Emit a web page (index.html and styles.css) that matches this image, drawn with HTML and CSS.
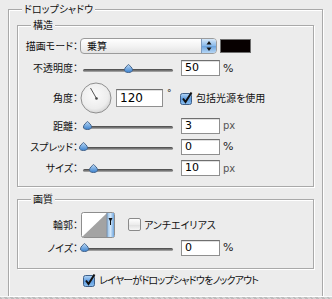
FILE: index.html
```html
<!DOCTYPE html>
<html lang="ja">
<head>
<meta charset="utf-8">
<link rel="stylesheet" href="styles.css">
</head>
<body>
<div class="panel">
  <div class="group outer">
    <span class="legend">ドロップシャドウ</span>

    <div class="group inner struct">
      <span class="legend">構造</span>

      <div class="row r-mode">
        <span class="label">描画モード：</span>
        <div class="select">
          <span class="select-text">乗算</span>
          <span class="stepper">
            <svg width="14" height="14" viewBox="0 0 14 14"><polygon points="7,2 9.5,5.5 4.5,5.5" fill="#111"/><polygon points="7,12 9.5,8.5 4.5,8.5" fill="#111"/></svg>
          </span>
        </div>
        <span class="swatch"></span>
      </div>

      <div class="row r-opacity">
        <span class="label">不透明度：</span>
        <div class="slider">
          <svg class="thumb" style="left:41px" width="9" height="9" viewBox="0 0 9 9"><defs><linearGradient id="tg1" x1="0" y1="0" x2="0" y2="1"><stop offset="0" stop-color="#bcd9f5"/><stop offset="1" stop-color="#3b82cf"/></linearGradient></defs><path d="M4.5 0.5 C6 2 8.5 3.5 8.5 6 C8.5 7.6 7 8.5 4.5 8.5 C2 8.5 0.5 7.6 0.5 6 C0.5 3.5 3 2 4.5 0.5 Z" fill="url(#tg1)" stroke="#46658c"/></svg>
        </div>
        <span class="field">50</span>
        <span class="unit">%</span>
      </div>

      <div class="row r-angle">
        <span class="label">角度：</span>
        <svg class="dial" width="32" height="32" viewBox="0 0 32 32"><defs><radialGradient id="dg" cx="0.45" cy="0.4" r="0.65"><stop offset="0" stop-color="#fbfbfb"/><stop offset="0.7" stop-color="#ededed"/><stop offset="1" stop-color="#cfcfcf"/></radialGradient></defs><circle cx="16" cy="16" r="15" fill="url(#dg)" stroke="#8f8f8f"/><line x1="16.5" y1="16.5" x2="10.5" y2="6" stroke="#555" stroke-width="1"/><circle cx="16.5" cy="16.5" r="1.3" fill="#444"/></svg>
        <span class="field wide">120</span>
        <span class="deg">°</span>
        <svg class="check on" width="13" height="13" viewBox="0 0 13 13"><defs><linearGradient id="cg1" x1="0" y1="0" x2="0" y2="1"><stop offset="0" stop-color="#b7d7f5"/><stop offset="0.5" stop-color="#5d9be0"/><stop offset="1" stop-color="#8cc0f0"/></linearGradient></defs><rect x="0.5" y="1.5" width="11" height="11" rx="2" fill="url(#cg1)" stroke="#3e5f88"/><path d="M3 6.5 L5.5 10 L11.5 0.5" fill="none" stroke="#111" stroke-width="2"/></svg>
        <span class="check-text">包括光源を使用</span>
      </div>

      <div class="row r-dist">
        <span class="label">距離：</span>
        <div class="slider">
          <svg class="thumb" style="left:0px" width="9" height="9" viewBox="0 0 9 9"><defs><linearGradient id="tg2" x1="0" y1="0" x2="0" y2="1"><stop offset="0" stop-color="#bcd9f5"/><stop offset="1" stop-color="#3b82cf"/></linearGradient></defs><path d="M4.5 0.5 C6 2 8.5 3.5 8.5 6 C8.5 7.6 7 8.5 4.5 8.5 C2 8.5 0.5 7.6 0.5 6 C0.5 3.5 3 2 4.5 0.5 Z" fill="url(#tg2)" stroke="#46658c"/></svg>
        </div>
        <span class="field">3</span>
        <span class="unit px">px</span>
      </div>

      <div class="row r-spread">
        <span class="label">スプレッド：</span>
        <div class="slider">
          <svg class="thumb" style="left:-4px" width="9" height="9" viewBox="0 0 9 9"><defs><linearGradient id="tg3" x1="0" y1="0" x2="0" y2="1"><stop offset="0" stop-color="#bcd9f5"/><stop offset="1" stop-color="#3b82cf"/></linearGradient></defs><path d="M4.5 0.5 C6 2 8.5 3.5 8.5 6 C8.5 7.6 7 8.5 4.5 8.5 C2 8.5 0.5 7.6 0.5 6 C0.5 3.5 3 2 4.5 0.5 Z" fill="url(#tg3)" stroke="#46658c"/></svg>
        </div>
        <span class="field">0</span>
        <span class="unit">%</span>
      </div>

      <div class="row r-size">
        <span class="label">サイズ：</span>
        <div class="slider">
          <svg class="thumb" style="left:6px" width="9" height="9" viewBox="0 0 9 9"><defs><linearGradient id="tg4" x1="0" y1="0" x2="0" y2="1"><stop offset="0" stop-color="#bcd9f5"/><stop offset="1" stop-color="#3b82cf"/></linearGradient></defs><path d="M4.5 0.5 C6 2 8.5 3.5 8.5 6 C8.5 7.6 7 8.5 4.5 8.5 C2 8.5 0.5 7.6 0.5 6 C0.5 3.5 3 2 4.5 0.5 Z" fill="url(#tg4)" stroke="#46658c"/></svg>
        </div>
        <span class="field">10</span>
        <span class="unit px">px</span>
      </div>
    </div>

    <div class="group inner quality">
      <span class="legend">画質</span>

      <div class="row r-contour">
        <span class="label">輪郭：</span>
        <svg class="contour" width="34" height="26" viewBox="0 0 34 26"><defs><linearGradient id="sg" x1="0" y1="0" x2="1" y2="0"><stop offset="0" stop-color="#8fbde9"/><stop offset="0.5" stop-color="#d3e6f8"/><stop offset="1" stop-color="#6fa6de"/></linearGradient></defs><rect x="0.5" y="0.5" width="33" height="25" rx="2" fill="#fff" stroke="#8d8d8d"/><polygon points="1,25 26,1 26,25" fill="#a3a3a3"/><rect x="26" y="1" width="7" height="24" fill="url(#sg)"/><line x1="26" y1="1" x2="26" y2="25" stroke="#7a8fa8"/><polygon points="27.5,6 31.5,6 29.5,10" fill="#111"/><line x1="29.5" y1="9" x2="29.5" y2="13" stroke="#111"/></svg>
        <span class="check off"></span>
        <span class="check-text">アンチエイリアス</span>
      </div>

      <div class="row r-noise">
        <span class="label">ノイズ：</span>
        <div class="slider">
          <svg class="thumb" style="left:-3px" width="9" height="9" viewBox="0 0 9 9"><defs><linearGradient id="tg5" x1="0" y1="0" x2="0" y2="1"><stop offset="0" stop-color="#bcd9f5"/><stop offset="1" stop-color="#3b82cf"/></linearGradient></defs><path d="M4.5 0.5 C6 2 8.5 3.5 8.5 6 C8.5 7.6 7 8.5 4.5 8.5 C2 8.5 0.5 7.6 0.5 6 C0.5 3.5 3 2 4.5 0.5 Z" fill="url(#tg5)" stroke="#46658c"/></svg>
        </div>
        <span class="field">0</span>
        <span class="unit">%</span>
      </div>
    </div>

    <div class="knockout">
      <svg class="check on" width="13" height="13" viewBox="0 0 13 13"><defs><linearGradient id="cg2" x1="0" y1="0" x2="0" y2="1"><stop offset="0" stop-color="#b7d7f5"/><stop offset="0.5" stop-color="#5d9be0"/><stop offset="1" stop-color="#8cc0f0"/></linearGradient></defs><rect x="0.5" y="1.5" width="11" height="11" rx="2" fill="url(#cg2)" stroke="#3e5f88"/><path d="M3 6.5 L5.5 10 L11.5 0.5" fill="none" stroke="#111" stroke-width="2"/></svg>
      <span class="check-text tight">レイヤーがドロップシャドウをノックアウト</span>
    </div>
  </div>
</div>
<div class="band"></div>
</body>
</html>
```

FILE: styles.css
```css
* { box-sizing: border-box; }
html, body { margin: 0; padding: 0; }
body {
  width: 332px;
  height: 299px;
  overflow: hidden;
  background: #ececec;
  font-family: "Noto Sans CJK JP", "Noto Sans", sans-serif;
  font-size: 10px;
  color: #111;
  font-feature-settings: "palt";
}
.panel { height: 296px; padding-top: 9px; }
.group {
  position: relative;
  border: 1px solid #a9a9a9;
  box-shadow: inset 1px 1px 0 #fff, 1px 1px 0 #fff;
}
.outer {
  margin-left: 8px;
  width: 315px;
  height: 287px;
  border-bottom: none;
  padding-top: 15px;
}
.inner { margin-left: 8px; width: 297px; }
.struct { height: 162px; padding-top: 9px; }
.quality { margin-top: 12px; height: 70px; padding-top: 11px; }
.legend {
  position: absolute;
  top: -8px;
  left: 13px;
  padding: 0 2px;
  line-height: 14px;
  background: #ececec;
  white-space: nowrap;
}
.row { display: flex; align-items: center; }
.r-mode { height: 21px; }
.r-opacity { height: 24px; }
.r-angle { height: 36px; }
.r-dist { height: 19px; }
.r-spread { height: 23px; }
.r-size { height: 20px; }
.r-contour { height: 27px; }
.r-noise { height: 19px; }
.label {
  flex: none;
  width: 62px;
  padding-right: 2px;
  text-align: right;
  white-space: nowrap;
  line-height: 14px;
}
.select {
  flex: none;
  display: flex;
  align-items: center;
  width: 137px;
  height: 16px;
  border: 1px solid #9b9b9b;
  border-radius: 4px;
  background: linear-gradient(#ffffff, #f3f3f3 50%, #e4e4e4);
  overflow: hidden;
}
.select-text { flex: 1; padding-left: 6px; line-height: 14px; }
.stepper {
  flex: none;
  width: 15px;
  height: 14px;
  border-left: 1px solid #7d9bbf;
  background: linear-gradient(#d6e8f9, #86b8ea 50%, #6aa3de 51%, #b6d6f5);
  display: flex;
  align-items: center;
  justify-content: center;
}
.stepper svg { display: block; }
.swatch {
  flex: none;
  margin-left: 3px;
  width: 31px;
  height: 14px;
  background: #070000;
  border: 1px solid #6e6e6e;
}
.slider {
  flex: none;
  position: relative;
  margin-left: 3px;
  width: 90px;
  height: 9px;
}
.slider::before {
  content: "";
  position: absolute;
  left: 0;
  right: 0;
  bottom: 1px;
  height: 3px;
  border-radius: 2px;
  background: linear-gradient(#444, #7e7e7e 60%, #b5b5b5);
}
.thumb { position: absolute; top: 0; display: block; }
.field {
  flex: none;
  margin-left: 8px;
  width: 39px;
  height: 16px;
  padding-left: 3px;
  border: 1px solid #8f8f8f;
  border-top-color: #6f6f6f;
  background: #fff;
  box-shadow: inset 0 1px 0 #e0e0e0;
  font-family: "DejaVu Sans", sans-serif;
  font-size: 11px;
  line-height: 14px;
  color: #000;
}
.unit {
  flex: none;
  margin-left: 3px;
  font-family: "DejaVu Sans", sans-serif;
  font-size: 11px;
  color: #222;
}
.unit.px { color: #555; font-size: 10px; }
.dial { flex: none; display: block; margin-left: 0; }
.field.wide { margin-left: 4px; width: 47px; height: 18px; font-size: 12px; line-height: 16px; }
.deg {
  flex: none;
  width: 11px;
  align-self: flex-start;
  margin-top: 8px;
  padding-left: 4px;
  font-family: "DejaVu Sans", sans-serif;
  font-size: 9px;
}
.check { flex: none; display: block; }
.r-angle .check { margin-left: 6px; }
.check.off {
  width: 13px;
  height: 13px;
  margin-left: 13px;
  border: 1px solid #8a8a8a;
  border-radius: 2px;
  background: linear-gradient(#ffffff, #ececec 50%, #dedede 51%, #f6f6f6);
}
.check-text { flex: none; margin-left: 3px; white-space: nowrap; line-height: 14px; }
.check-text.tight { letter-spacing: -0.8px; }
.contour { flex: none; display: block; margin-left: 1px; }
.knockout {
  display: flex;
  align-items: center;
  height: 18px;
  margin-top: 2px;
  padding-left: 74px;
}
.band {
  height: 3px;
  background: repeating-linear-gradient(45deg, #bcbcbc 0 2px, #d2d2d2 2px 4px);
  border-top: 1px solid #fafafa;
}
```
